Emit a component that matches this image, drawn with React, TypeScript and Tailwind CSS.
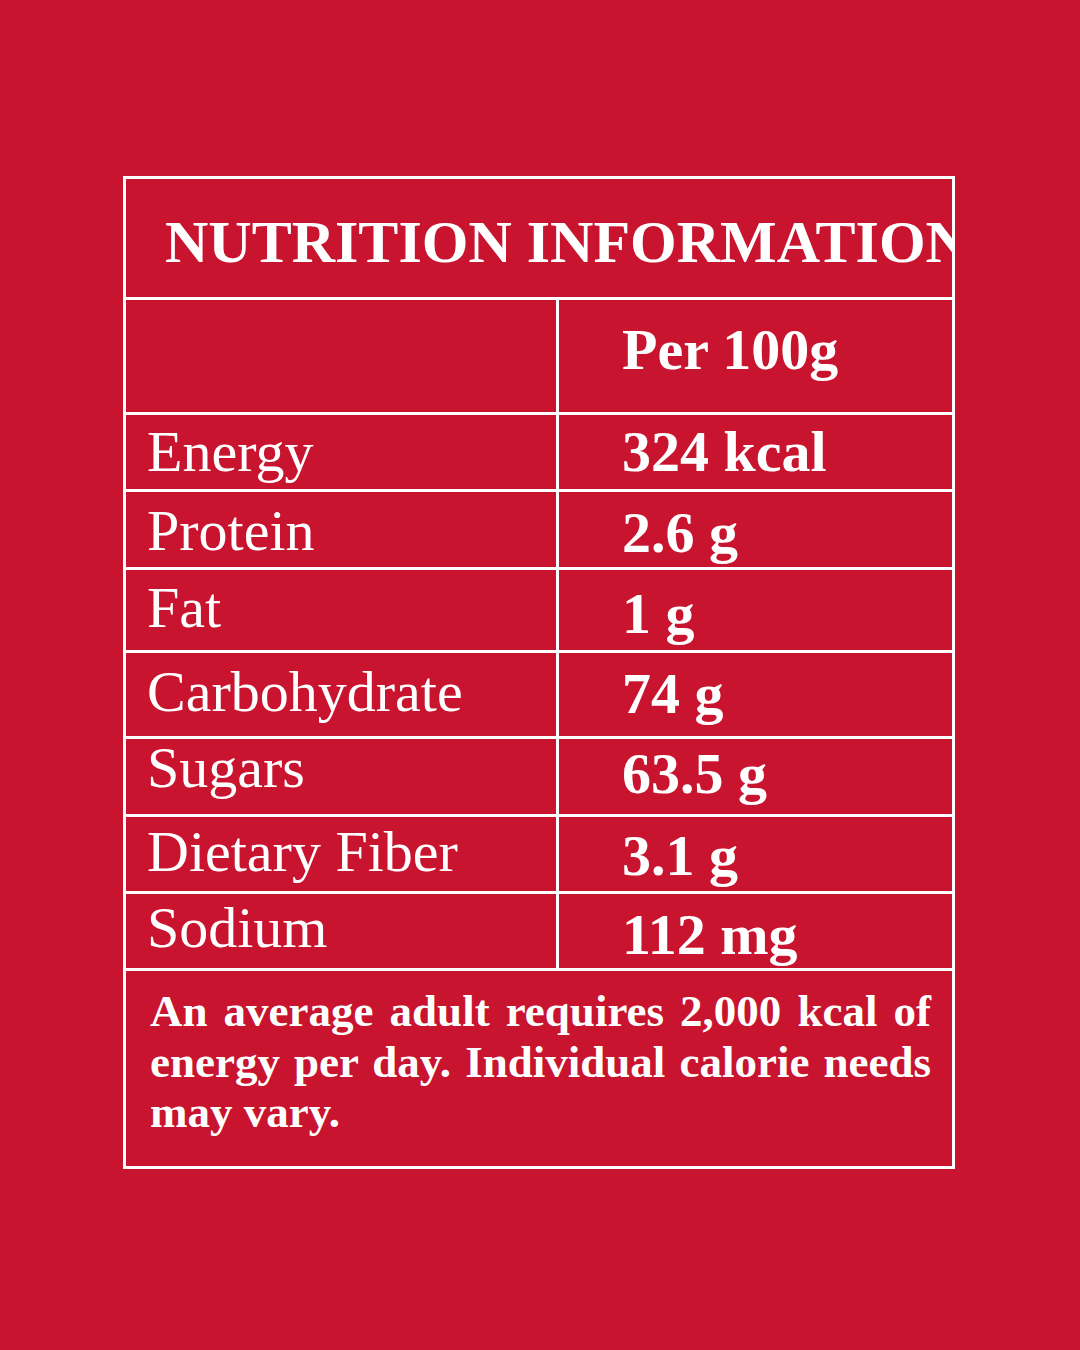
import React from 'react';

const rows = [
  { label: 'Energy', value: '324 kcal', h: 'h-[77px]', lt: 'pt-[8px]', vt: 'pt-[8px]' },
  { label: 'Protein', value: '2.6 g', h: 'h-[78px]', lt: 'pt-[10px]', vt: 'pt-[12px]' },
  { label: 'Fat', value: '1 g', h: 'h-[83px]', lt: 'pt-[9px]', vt: 'pt-[15px]' },
  { label: 'Carbohydrate', value: '74 g', h: 'h-[86px]', lt: 'pt-[10px]', vt: 'pt-[12px]' },
  { label: 'Sugars', value: '63.5 g', h: 'h-[78px]', lt: 'pt-[0px]', vt: 'pt-[6px]' },
  { label: 'Dietary Fiber', value: '3.1 g', h: 'h-[77px]', lt: 'pt-[6px]', vt: 'pt-[10px]' },
  { label: 'Sodium', value: '112 mg', h: 'h-[77px]', lt: 'pt-[5px]', vt: 'pt-[12px]' },
];

export default function App() {
  return (
    <div className="min-h-[1350px] w-full bg-[#c8142e] pt-[176px] pl-[123px] text-white font-['Liberation_Serif',serif]">
      <div className="w-[832px] border-[3px] border-white">
        {/* title */}
        <div className="h-[118px] overflow-hidden whitespace-nowrap pl-[39px] pt-[33px] text-[60px] font-bold leading-none">
          NUTRITION INFORMATION
        </div>

        {/* column header */}
        <div className="flex h-[115px] border-t-[3px] border-white">
          <div className="w-[433px] border-r-[3px] border-white" />
          <div className="pl-[63px] pt-[21px] text-[58px] font-bold leading-none">Per 100g</div>
        </div>

        {rows.map((r) => (
          <div key={r.label} className={`flex border-t-[3px] border-white ${r.h}`}>
            <div className={`w-[433px] border-r-[3px] border-white pl-[21px] text-[58px] leading-none ${r.lt}`}>
              {r.label}
            </div>
            <div className={`pl-[63px] text-[58px] font-bold leading-none ${r.vt}`}>{r.value}</div>
          </div>
        ))}

        {/* footnote */}
        <div className="h-[198px] border-t-[3px] border-white pl-[24px] pr-[21px] pt-[15px]">
          <p className="text-justify text-[45px] font-bold leading-[50.5px]">
            An average adult requires 2,000 kcal of energy per day. Individual calorie needs may vary.
          </p>
        </div>
      </div>
    </div>
  );
}
